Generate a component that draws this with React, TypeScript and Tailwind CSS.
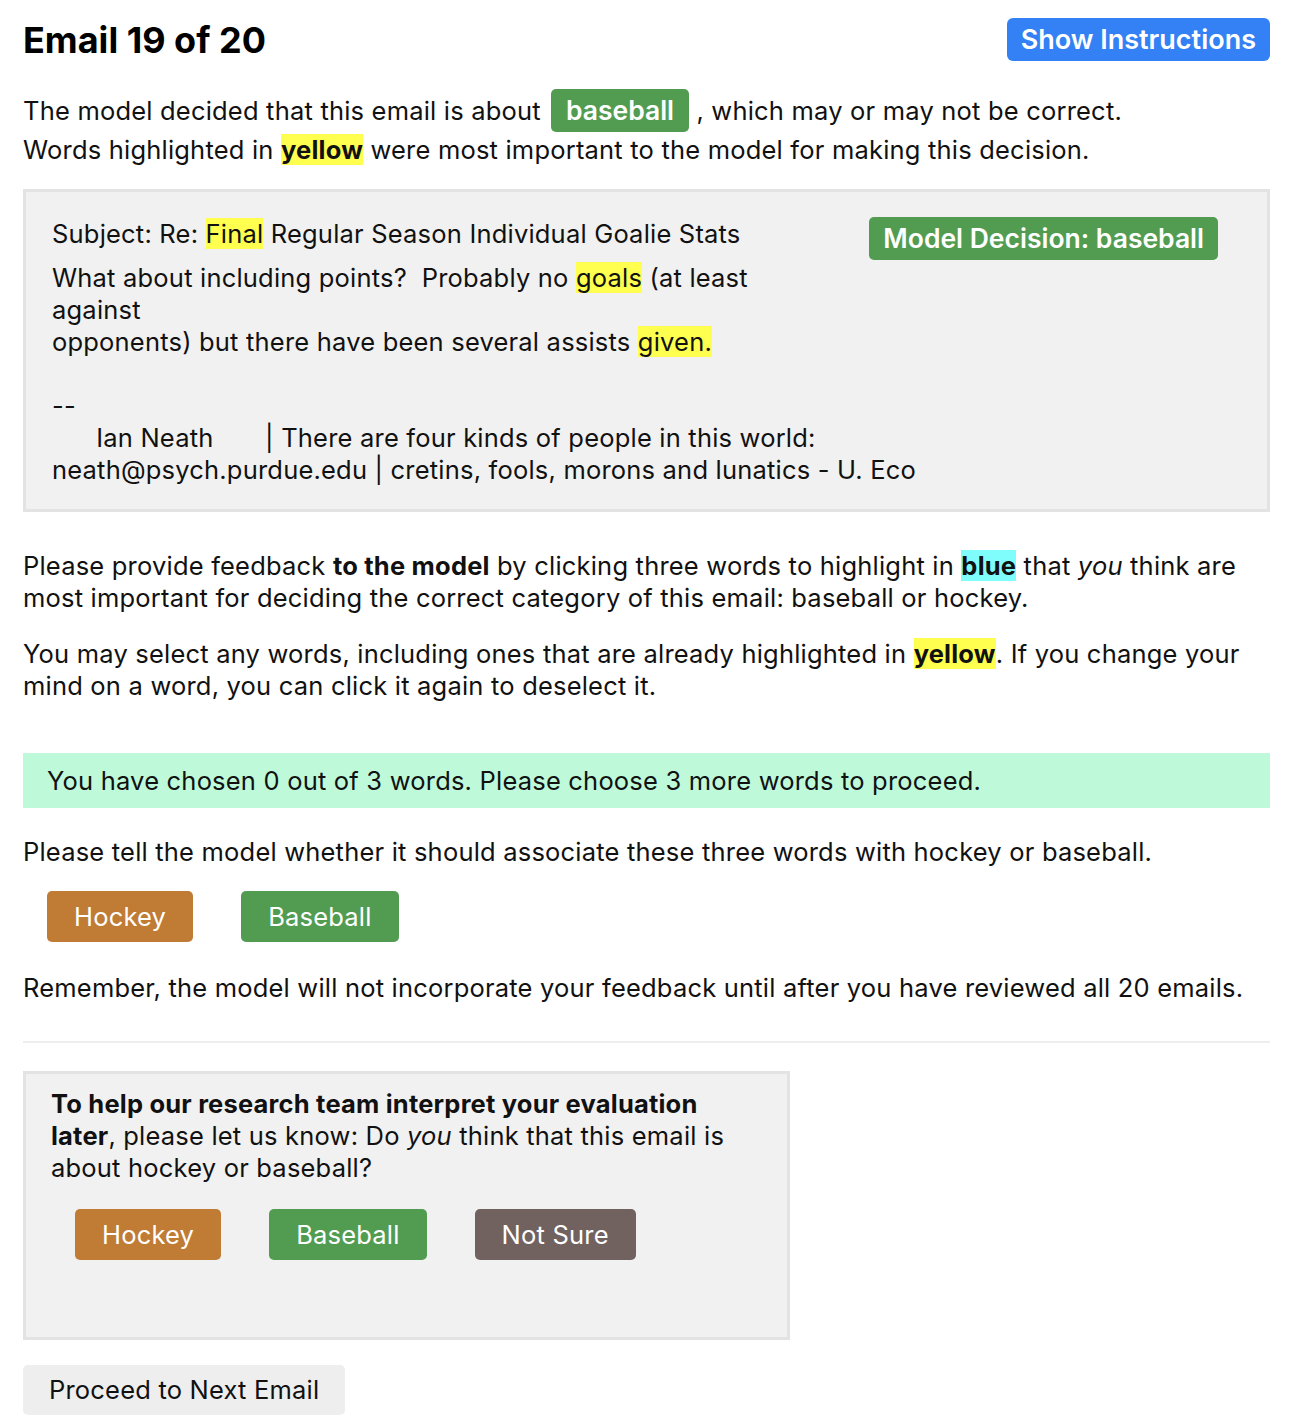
import React, { useState } from 'react';

const hl = 'bg-[#ffff4f]';

const ChoiceButton: React.FC<{ label: string; color: string; onClick?: () => void }> = ({ label, color, onClick }) => (
  <button
    onClick={onClick}
    className={`${color} h-[51px] rounded-[5px] px-[27px] text-[25.5px] leading-none tracking-[0.2px] text-white`}
  >
    {label}
  </button>
);

const App: React.FC = () => {
  const [chosen] = useState<number>(0);

  return (
    <div className="min-h-screen bg-white pt-[18px] pr-[22px] pb-4 pl-[23px] text-[25.5px] leading-[32px] tracking-[0.2px] text-[#111] [font-family:Inter,'Noto_Sans',sans-serif]">
      {/* header */}
      <div className="flex items-start justify-between">
        <h1 className="text-[36px] leading-[44px] font-bold tracking-normal text-black">Email 19 of 20</h1>
        <button className="h-[43px] rounded-[6px] bg-[#3381f5] px-[14px] text-[27px] font-semibold tracking-normal text-white">
          Show Instructions
        </button>
      </div>

      <div className="mt-[27px]">
        <div className="flex h-[43px] items-center whitespace-pre">
          <span>The model decided that this email is about</span>
          <span className="ml-[10px] rounded-[5px] bg-[#529c52] px-[15px] text-[26.5px] leading-[43px] font-semibold tracking-normal text-white">
            baseball
          </span>
          <span> , which may or may not be correct.</span>
        </div>
        <p className="mt-[2px]">
          Words highlighted in <span className={`${hl} font-bold`}>yellow</span> were most important to the model for
          making this decision.
        </p>
      </div>

      {/* email */}
      <div className="mt-[23px] border-[3px] border-[#e3e3e3] bg-[#f1f1f1] px-[26px] pt-[26px] pb-[23px]">
        <span className="float-right mt-[-1px] mr-[23px] rounded-[5px] bg-[#529c52] px-[14px] text-[26.5px] leading-[43px] font-semibold tracking-normal text-white">
          Model Decision: baseball
        </span>
        <p className="mb-[12px]">
          Subject: Re: <span className={hl}>Final</span> Regular Season Individual Goalie Stats
        </p>
        <div className="whitespace-pre-wrap">
          <p>
            What about including points?  Probably no <span className={hl}>goals</span> (at least
          </p>
          <p>against</p>
          <p>
            opponents) but there have been several assists <span className={hl}>given.</span>
          </p>
          <p>&nbsp;</p>
          <p>--</p>
          <p>{'      Ian Neath       | There are four kinds of people in this world:'}</p>
          <p>neath@psych.purdue.edu | cretins, fools, morons and lunatics - U. Eco</p>
        </div>
      </div>

      {/* instructions */}
      <p className="mt-[38px]">
        Please provide feedback <b>to the model</b> by clicking three words to highlight in{' '}
        <span className="bg-[#7ffdfd] font-bold">blue</span> that <i>you</i> think are most important for deciding the
        correct category of this email: baseball or hockey.
      </p>
      <p className="mt-[24px]">
        You may select any words, including ones that are already highlighted in{' '}
        <span className={`${hl} font-bold`}>yellow</span>. If you change your mind on a word, you can click it again to
        deselect it.
      </p>

      <div className="mt-[51px] flex h-[55px] items-center bg-[#befada] px-6">
        You have chosen {chosen} out of 3 words. Please choose {3 - chosen} more words to proceed.
      </div>

      <p className="mt-[28px]">Please tell the model whether it should associate these three words with hockey or baseball.</p>
      <div className="mt-[23px] flex gap-12 pl-[24px]">
        <ChoiceButton label="Hockey" color="bg-[#c07b35]" />
        <ChoiceButton label="Baseball" color="bg-[#529c52]" />
      </div>
      <p className="mt-[30px]">
        Remember, the model will not incorporate your feedback until after you have reviewed all 20 emails.
      </p>

      <hr className="mt-[37px] border-t-2 border-[#eeeeee]" />

      {/* survey */}
      <div className="mt-[28px] h-[269px] w-[767px] border-[3px] border-[#e3e3e3] bg-[#f1f1f1] pt-[14px] pr-[20px] pl-[25px]">
        <p>
          <b>To help our research team interpret your evaluation later</b>, please let us know: Do <i>you</i> think that
          this email is about hockey or baseball?
        </p>
        <div className="mt-[25px] flex gap-12 pl-[24px]">
          <ChoiceButton label="Hockey" color="bg-[#c07b35]" />
          <ChoiceButton label="Baseball" color="bg-[#529c52]" />
          <ChoiceButton label="Not Sure" color="bg-[#71625f]" />
        </div>
      </div>

      <button className="mt-[25px] h-[50px] rounded-[5px] bg-[#eeeeee] px-[26px] text-[25.5px] tracking-[0.2px] text-[#111]">
        Proceed to Next Email
      </button>
    </div>
  );
};

export default App;
